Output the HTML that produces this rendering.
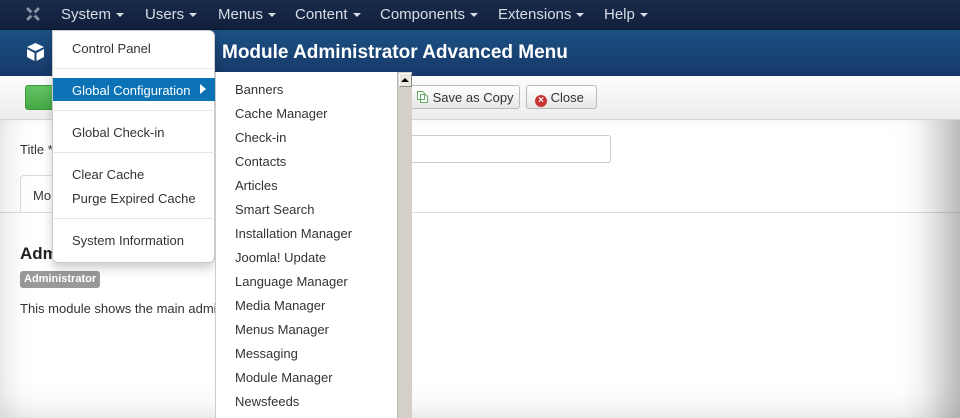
<!DOCTYPE html>
<html><head><meta charset="utf-8"><style>
*{box-sizing:border-box;margin:0;padding:0}
body{width:960px;height:418px;overflow:hidden;font-family:"Liberation Sans",Arial,sans-serif;font-size:13px;color:#333;background:#fff;position:relative}
.nav{position:absolute;left:0;top:0;width:960px;height:30px;background:linear-gradient(#1a2a4a,#10203c);border-bottom:1px solid #0c1830}
.nav span{position:absolute;top:6px;color:#d8dde6;font-size:15px}
.caret{display:inline-block;width:0;height:0;border-left:4px solid transparent;border-right:4px solid transparent;border-top:4px solid #d8dde6;vertical-align:middle;margin-left:5px}
.hdr{position:absolute;left:0;top:30px;width:960px;height:46px;background:linear-gradient(#1b5184,#173868)}
.hdr h1{position:absolute;left:222px;top:12px;color:#fff;font-size:19px;font-weight:bold}
.tb{position:absolute;left:0;top:76px;width:960px;height:44px;background:linear-gradient(#fdfdfd,#ececec);border-bottom:1px solid #d4d4d4}
.btn{position:absolute;top:9px;height:24px;border:1px solid #bbb;border-radius:3px;background:linear-gradient(#fff,#e6e6e6);font-size:13px;padding:4px 8px 0 8px;color:#333;white-space:nowrap}
.content{position:absolute;left:0;top:120px;width:960px;height:298px}
.vig{position:absolute;left:0;top:120px;width:960px;height:298px;box-shadow:inset 0 -25px 35px -20px rgba(0,0,0,.1),inset 30px 0 30px -25px rgba(0,0,0,.12),inset -50px 0 40px -30px rgba(0,0,0,.3);pointer-events:none}
.dd{position:absolute;left:52px;top:30px;width:163px;height:233px;background:#fff;border:1px solid #ccc;border-radius:0 6px 6px 6px;box-shadow:0 5px 10px rgba(0,0,0,.2)}
.dd div{position:absolute;left:19px;font-size:13px;color:#333}
.dd hr{position:absolute;left:1px;width:161px;border:0;border-top:1px solid #e5e5e5}
.act{position:absolute;left:0;top:47px;width:162px;height:23px;background:#0b73b5}
.sub{position:absolute;left:215px;top:72px;width:197px;height:346px;background:#fff;border-left:1px solid #ccc;border-right:1px solid #999}
.sub div{position:absolute;left:19px;font-size:13px;color:#333}
.sub .sb{left:181px;top:0;width:15px;height:346px;background:#d4d0c8;border-left:1px solid #bbb}
.sbb{position:absolute;left:1px;top:1px;width:13px;height:14px;background:#ece9e0;border:1px solid #888;border-top-color:#fff;border-left-color:#fff}
</style></head><body>
<div class="nav">
<svg style="position:absolute;left:25px;top:6px" width="16" height="16" viewBox="0 0 16 16"><g stroke="#8a94a6" stroke-width="3" stroke-linecap="round" fill="none"><path d="M3 3 L13 13 M13 3 L3 13"/></g><circle cx="8" cy="8" r="2.5" fill="#1a2a4a"/></svg>
<span style="left:61px">System<i class="caret"></i></span>
<span style="left:145px">Users<i class="caret"></i></span>
<span style="left:218px">Menus<i class="caret"></i></span>
<span style="left:295px">Content<i class="caret"></i></span>
<span style="left:380px">Components<i class="caret"></i></span>
<span style="left:498px">Extensions<i class="caret"></i></span>
<span style="left:604px">Help<i class="caret"></i></span>
</div>
<div class="hdr">
<svg style="position:absolute;left:26px;top:12px" width="19" height="20" viewBox="0 0 19 20"><path d="M9.5 1 L18 5 L9.5 9 L1 5Z M1 7 L8.5 11 L8.5 19 L1 15Z M18 7 L10.5 11 L10.5 19 L18 15Z" fill="#fff"/></svg>
<h1>Module Administrator Advanced Menu</h1>
</div>
<div class="tb">
<div style="position:absolute;left:25px;top:9px;width:40px;height:25px;border-radius:3px;background:linear-gradient(#62c462,#45a845);border:1px solid #3c9a3c"></div>
<div class="btn" style="left:408px;width:112px"><svg width="12" height="12" viewBox="0 0 12 12" style="vertical-align:-1px"><path d="M0.5 0.5h5l2 2v6h-7z M3.5 3.5h5l2 2v6h-7z" fill="#fff" stroke="#6a6"/></svg> Save as Copy</div>
<div class="btn" style="left:526px;width:71px"><span style="display:inline-block;width:12px;height:12px;border-radius:50%;background:#c33;color:#fff;font-size:10px;line-height:12px;text-align:center;font-weight:bold;vertical-align:-1px">×</span> Close</div>
</div>
<div class="content">
<div style="position:absolute;left:20px;top:22px">Title *</div>
<div style="position:absolute;left:400px;top:15px;width:211px;height:28px;border:1px solid #ccc;border-radius:3px"></div>
<div style="position:absolute;left:20px;top:55px;width:40px;height:38px;border:1px solid #ddd;border-bottom:0;border-radius:4px 4px 0 0;padding:12px 0 0 12px">Mo</div>
<div style="position:absolute;left:0;top:92px;width:960px;border-top:1px solid #ddd"></div>
<div style="position:absolute;left:20px;top:124px;font-size:17px;font-weight:bold;color:#222">Administrator Advanced</div>
<div style="position:absolute;left:20px;top:151px;height:17px;padding:2px 4px;background:#999;color:#fff;font-size:11px;font-weight:bold;border-radius:3px">Administrator</div>
<div style="position:absolute;left:20px;top:181px">This module shows the main admin</div>
</div>
<div class="vig"></div>
<div class="dd">
<div style="top:10px">Control Panel</div>
<hr style="top:37px">
<span class="act"></span>
<div style="top:52px;color:#fff">Global Configuration</div>
<span style="position:absolute;left:147px;top:53px;width:0;height:0;border-top:5px solid transparent;border-bottom:5px solid transparent;border-left:6px solid #fff"></span>
<hr style="top:79px">
<div style="top:94px">Global Check-in</div>
<hr style="top:121px">
<div style="top:136px">Clear Cache</div>
<div style="top:160px">Purge Expired Cache</div>
<hr style="top:187px">
<div style="top:202px">System Information</div>
</div>
<div class="sub">
<div style="top:10px">Banners</div>
<div style="top:34px">Cache Manager</div>
<div style="top:58px">Check-in</div>
<div style="top:82px">Contacts</div>
<div style="top:106px">Articles</div>
<div style="top:130px">Smart Search</div>
<div style="top:154px">Installation Manager</div>
<div style="top:178px">Joomla! Update</div>
<div style="top:202px">Language Manager</div>
<div style="top:226px">Media Manager</div>
<div style="top:250px">Menus Manager</div>
<div style="top:274px">Messaging</div>
<div style="top:298px">Module Manager</div>
<div style="top:322px">Newsfeeds</div>
<div class="sb"><span class="sbb"></span><span style="position:absolute;left:3px;top:6px;width:0;height:0;border-left:4px solid transparent;border-right:4px solid transparent;border-bottom:4px solid #000"></span></div>
</div>
</body></html>
